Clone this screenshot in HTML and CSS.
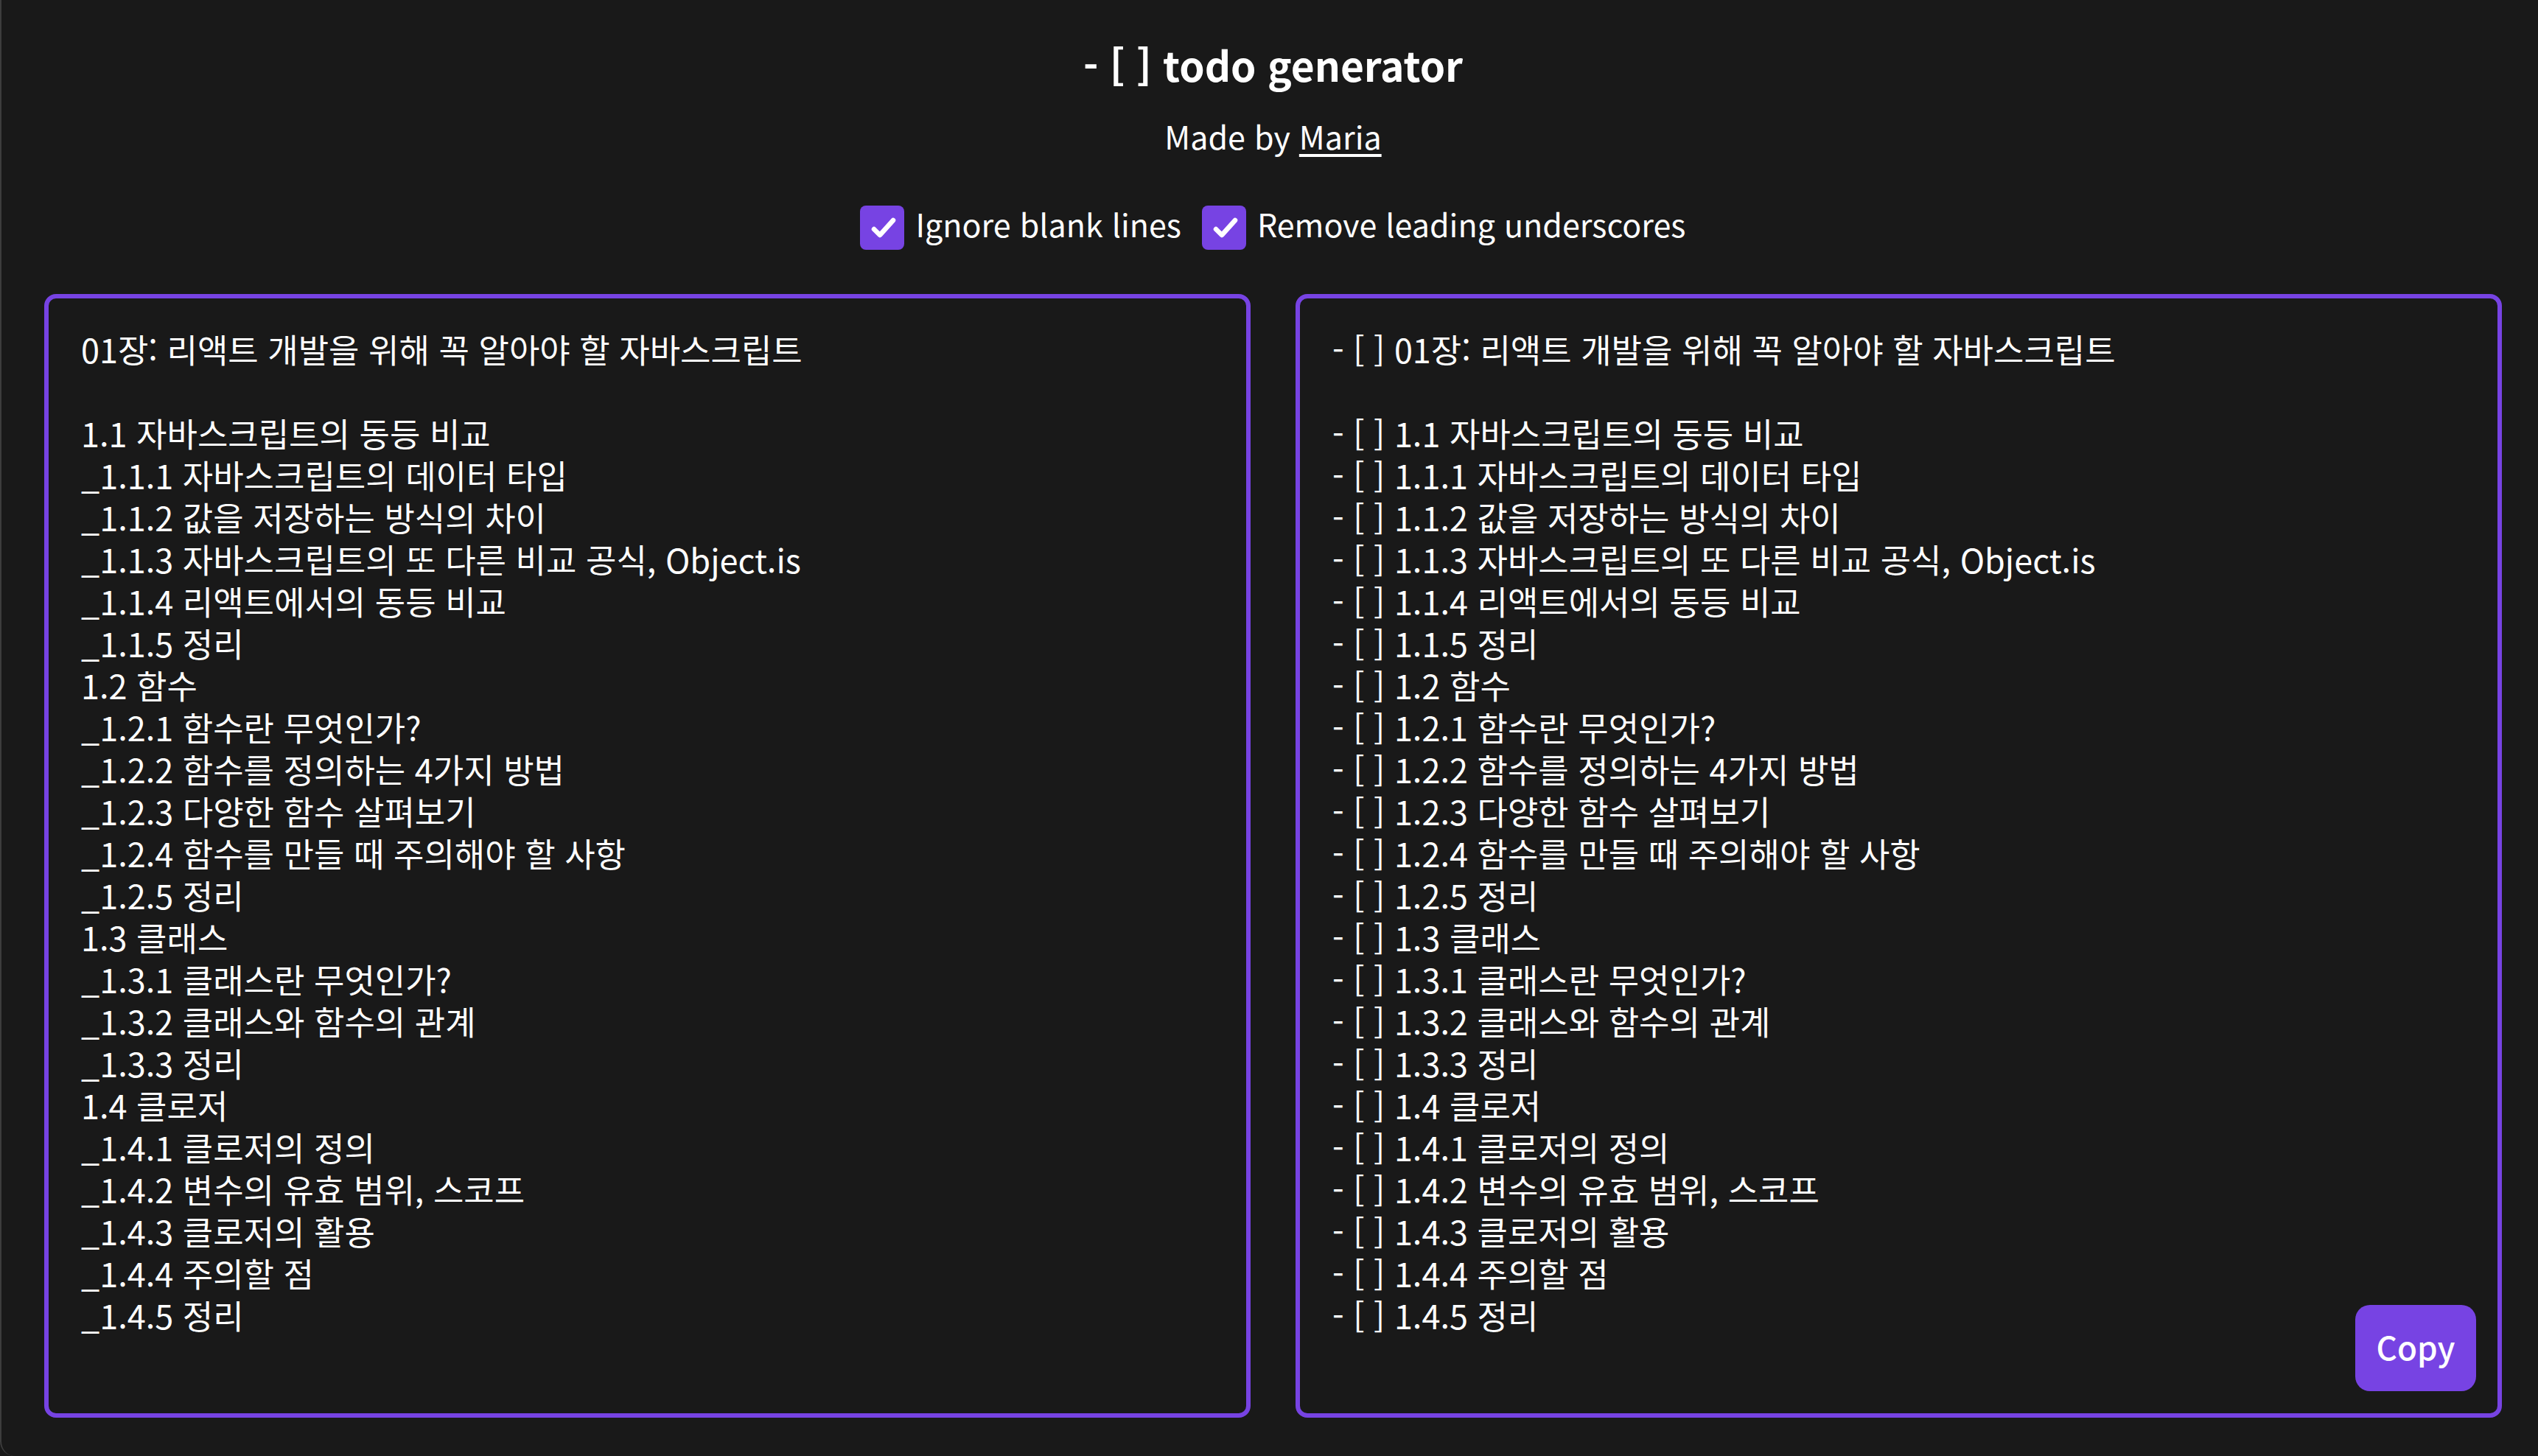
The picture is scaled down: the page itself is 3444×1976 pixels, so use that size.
FILE: index.html
```html
<!DOCTYPE html>
<html lang="ko">
<head>
<meta charset="utf-8">
<title>- [ ] todo generator</title>
<link rel="stylesheet" href="styles.css">
</head>
<body>
<div class="app">
  <header class="head">
    <h1 class="title">- [ ] todo generator</h1>
    <p class="byline">Made by <a class="author" href="#">Maria</a></p>
    <div class="options">
      <label class="opt">
        <span class="check"><svg viewBox="0 0 60 60" width="60" height="60"><path d="M19 32 L27 40 L45 20" fill="none" stroke="#fff" stroke-width="6.5" stroke-linecap="round" stroke-linejoin="round"/></svg></span>
        <span class="opt-text">Ignore blank lines</span>
      </label>
      <label class="opt">
        <span class="check"><svg viewBox="0 0 60 60" width="60" height="60"><path d="M19 32 L27 40 L45 20" fill="none" stroke="#fff" stroke-width="6.5" stroke-linecap="round" stroke-linejoin="round"/></svg></span>
        <span class="opt-text">Remove leading underscores</span>
      </label>
    </div>
  </header>
  <main class="panels">
    <section class="panel">
<div class="text">01장: 리액트 개발을 위해 꼭 알아야 할 자바스크립트

1.1 자바스크립트의 동등 비교
_1.1.1 자바스크립트의 데이터 타입
_1.1.2 값을 저장하는 방식의 차이
_1.1.3 자바스크립트의 또 다른 비교 공식, Object.is
_1.1.4 리액트에서의 동등 비교
_1.1.5 정리
1.2 함수
_1.2.1 함수란 무엇인가?
_1.2.2 함수를 정의하는 4가지 방법
_1.2.3 다양한 함수 살펴보기
_1.2.4 함수를 만들 때 주의해야 할 사항
_1.2.5 정리
1.3 클래스
_1.3.1 클래스란 무엇인가?
_1.3.2 클래스와 함수의 관계
_1.3.3 정리
1.4 클로저
_1.4.1 클로저의 정의
_1.4.2 변수의 유효 범위, 스코프
_1.4.3 클로저의 활용
_1.4.4 주의할 점
_1.4.5 정리</div>
    </section>
    <section class="panel">
<div class="text">- [ ] 01장: 리액트 개발을 위해 꼭 알아야 할 자바스크립트

- [ ] 1.1 자바스크립트의 동등 비교
- [ ] 1.1.1 자바스크립트의 데이터 타입
- [ ] 1.1.2 값을 저장하는 방식의 차이
- [ ] 1.1.3 자바스크립트의 또 다른 비교 공식, Object.is
- [ ] 1.1.4 리액트에서의 동등 비교
- [ ] 1.1.5 정리
- [ ] 1.2 함수
- [ ] 1.2.1 함수란 무엇인가?
- [ ] 1.2.2 함수를 정의하는 4가지 방법
- [ ] 1.2.3 다양한 함수 살펴보기
- [ ] 1.2.4 함수를 만들 때 주의해야 할 사항
- [ ] 1.2.5 정리
- [ ] 1.3 클래스
- [ ] 1.3.1 클래스란 무엇인가?
- [ ] 1.3.2 클래스와 함수의 관계
- [ ] 1.3.3 정리
- [ ] 1.4 클로저
- [ ] 1.4.1 클로저의 정의
- [ ] 1.4.2 변수의 유효 범위, 스코프
- [ ] 1.4.3 클로저의 활용
- [ ] 1.4.4 주의할 점
- [ ] 1.4.5 정리</div>
      <button class="copy" type="button">Copy</button>
    </section>
  </main>
</div>
</body>
</html>
```

FILE: styles.css
```css
* { box-sizing: border-box; }

html, body {
  margin: 0;
  padding: 0;
  background: #191919;
}

body {
  font-family: "Noto Sans CJK KR", "Noto Sans", sans-serif;
  color: #ffffff;
}

.app {
  height: 100vh;
  display: flex;
  flex-direction: column;
  border-left: 2px solid #3d3d3d;
  border-bottom-left-radius: 20px;
  padding: 0 49px 52px 58px;
}

.head {
  display: flex;
  flex-direction: column;
  align-items: center;
  padding-top: 52px;
}

.title {
  margin: 0;
  font-size: 55px;
  line-height: 70px;
  font-weight: 700;
}

.byline {
  margin: 34px 0 0;
  font-size: 43px;
  line-height: 57px;
}

.author {
  color: #ffffff;
  text-decoration: underline;
  text-decoration-thickness: 4px;
  text-underline-offset: 6px;
}

.options {
  margin-top: 66px;
  display: flex;
  align-items: center;
  gap: 28px;
  height: 60px;
}

.opt {
  display: flex;
  align-items: center;
  gap: 15px;
}

.check {
  width: 60px;
  height: 60px;
  border-radius: 8px;
  background: #7743e3;
  display: block;
}

.check svg { display: block; }

.opt-text {
  font-size: 43px;
  line-height: 43px;
  padding-bottom: 12px;
}

.panels {
  margin-top: 60px;
  flex: 1;
  display: grid;
  grid-template-columns: 1fr 1fr;
  gap: 61px;
  min-height: 0;
}

.panel {
  position: relative;
  border: 6px solid #7743e3;
  border-radius: 16px;
  padding: 40px 44px;
  overflow: hidden;
}

.text {
  white-space: pre;
  font-size: 45px;
  line-height: 57px;
}

.copy {
  position: absolute;
  right: 29px;
  bottom: 30px;
  width: 164px;
  height: 117px;
  border: 0;
  border-radius: 20px;
  background: #7743e3;
  color: #ffffff;
  font-family: "Noto Sans CJK KR", "Noto Sans", sans-serif;
  font-size: 44px;
  font-weight: 500;
  padding: 0 0 6px;
}
```
